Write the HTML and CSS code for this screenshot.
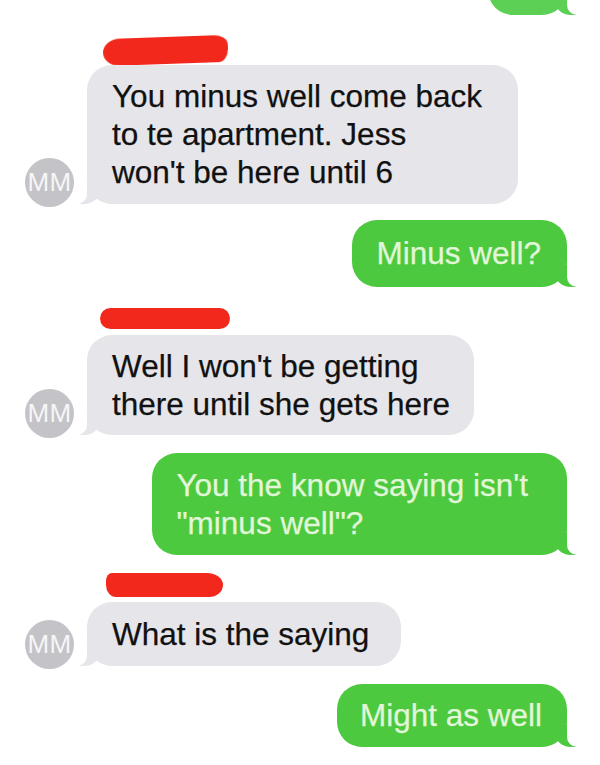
FILE: index.html
```html
<!DOCTYPE html>
<html lang="en">
<head>
<meta charset="UTF-8">
<meta name="viewport" content="width=device-width,initial-scale=1">
<title>Messages</title>
<link rel="stylesheet" href="styles.css">
</head>
<body>

<div class="thread">

  <div class="row out">
    <div class="bubble green peek">&nbsp;</div>
  </div>

  <!-- incoming 1 -->
  <div class="row in gap-top">
    <div class="avatar">MM</div>
    <div class="stack">
      <span class="redact r1"></span>
      <div class="bubble gray three">You minus well come back<br>to te apartment. Jess<br>won't be here until 6</div>
    </div>
  </div>

  <div class="row out gap-a">
    <div class="bubble green">Minus well?</div>
  </div>

  <!-- incoming 2 -->
  <div class="row in gap-b">
    <div class="avatar">MM</div>
    <div class="stack">
      <span class="redact r2"></span>
      <div class="bubble gray two">Well I won't be getting<br>there until she gets here</div>
    </div>
  </div>

  <div class="row out gap-c">
    <div class="bubble green two">You the know saying isn't<br>"minus well"?</div>
  </div>

  <!-- incoming 3 -->
  <div class="row in gap-c">
    <div class="avatar">MM</div>
    <div class="stack">
      <span class="redact r3"></span>
      <div class="bubble gray one">What is the saying</div>
    </div>
  </div>

  <div class="row out gap-c">
    <div class="bubble green last">Might as well</div>
  </div>

</div>

</body>
</html>
```

FILE: styles.css
```css
:root{
  --gray-bubble: #e5e5ea;
  --green:       #4dc93f;
  --green-text:  #e2f6d9;
  --red:         #f2281d;
  --avatar:      #c3c3c8;
  --radius:      25px;
}
*{box-sizing:border-box;margin:0;padding:0}
body{
  background:#fff;
  font-family:"Liberation Sans",Arial,sans-serif;
  color:#111;
  overflow:hidden;
}

/* ---------- hilo ------------- */
.thread{
  display:flex;
  flex-direction:column;
  padding:0 33px 0 25px;
}
.row{display:flex;align-items:flex-end}
.row.out{justify-content:flex-end}
.gap-top{margin-top:22px}
.gap-a{margin-top:16px}
.gap-b{margin-top:21px}
.gap-c{margin-top:18px}

/* ---------- avatar ----------- */
.avatar{
  position:relative;z-index:1;
  width:49px;height:49px;
  border-radius:50%;
  background:var(--avatar);
  color:#f6f6f6;
  font-size:26px;
  letter-spacing:.3px;
  display:flex;align-items:center;justify-content:center;
  margin-bottom:-3px;
  flex:none;
}
.stack{
  display:flex;
  flex-direction:column;
  align-items:flex-start;
  margin-left:13px;
}

/* ---------- tachones -------- */
.redact{
  display:block;
  background:var(--red);
  filter:blur(.6px);
}
.r1{
  width:125px;height:27px;
  margin-left:16px;
  border-radius:18px 14px 10px 16px / 14px 10px 14px 14px;
  transform:rotate(-2deg);
  margin-bottom:1px;
}
.r2{
  width:130px;height:21px;
  margin-left:13px;
  border-radius:11px;
  margin-bottom:6px;
}
.r3{
  width:117px;height:24px;
  margin-left:19px;
  border-radius:6px 16px 14px 10px / 8px 12px 12px 12px;
  margin-bottom:5px;
}

/* ---------- burbujas -------- */
.bubble{
  position:relative;
  font-size:31.5px;
  line-height:38px;
  -webkit-text-stroke:.25px currentColor;
  border-radius:var(--radius);
  padding:12px 30px 13px 25px;
  white-space:nowrap;
}
.bubble.three{padding-right:36px}
.bubble.two{padding:12px 24px 12px 25px}
.bubble.one{padding-top:13px;padding-bottom:13px;padding-right:32px}
.gray{background:var(--gray-bubble)}
.green{
  background:var(--green);
  color:var(--green-text);
  padding:14px 26px 15px 24px;
}
.green.two{padding:13px 39px 13px 24px}
.green.last{padding:12px 25px 13px 23px}
.green.peek{
  width:79px;
  margin-top:-52px;
  background:#5ccf55;
}

/* colitas */
.bubble::before,
.bubble::after{
  content:"";
  position:absolute;
  bottom:0;
  height:22px;
}
.gray::before{
  left:-7px;width:20px;
  background:var(--gray-bubble);
  border-bottom-right-radius:16px 14px;
}
.gray::after{
  left:-26px;width:26px;
  background:#fff;
  border-bottom-right-radius:10px;
}
.green::before{
  right:-10px;width:22px;
  background:var(--green);
  border-bottom-left-radius:16px 14px;
}
.green.peek::before{background:#5ccf55}
.green::after{
  right:-26px;width:26px;
  background:#fff;
  border-bottom-left-radius:10px;
}
```
